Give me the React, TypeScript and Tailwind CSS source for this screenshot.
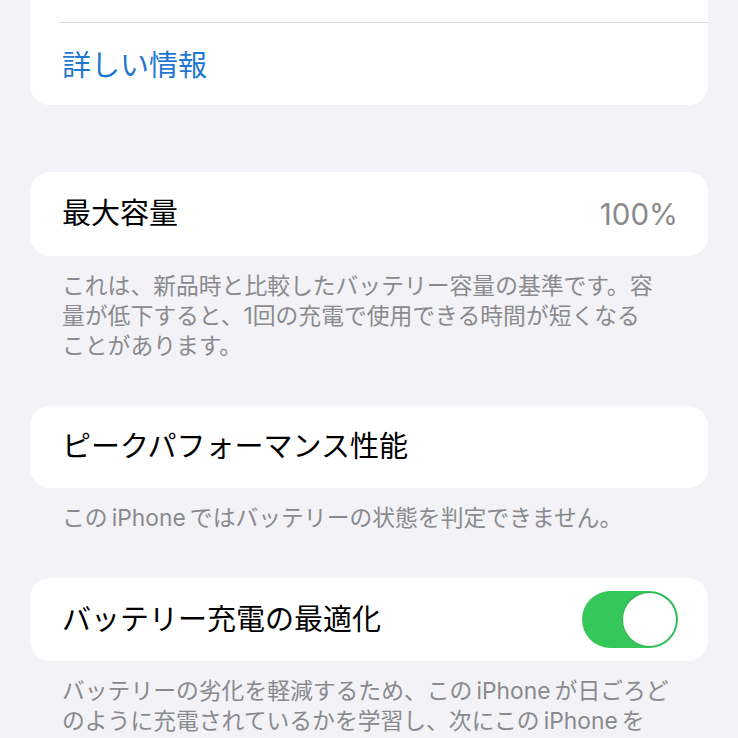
const Footer = ({ lines }: { lines: string[] }) => {
  return (
    <div className="px-[32px] pt-[15px] pb-[45px] text-[22.8px] leading-[30px] text-[#8a8a8e]">
      {lines.map((line) => (
        <p key={line} className="whitespace-nowrap">
          {line}
        </p>
      ))}
    </div>
  );
};

const Toggle = () => {
  return (
    <div className="flex h-[57px] w-[96px] items-center justify-end rounded-full bg-[#35c759] p-[2px]">
      <div className="h-[53px] w-[53px] rounded-full bg-white ring-1 ring-[#2fb24f]" />
    </div>
  );
};

const App = () => {
  return (
    <div className="min-h-screen overflow-hidden bg-[#f2f2f7] px-[30px] font-['Inter','Noto_Sans_CJK_JP',sans-serif]">
      <div className="rounded-b-[20px] bg-white">
        <div className="h-[22px]" />
        <div className="ml-[29px] h-px bg-[#d8d8dc]" />
        <div className="flex h-[82px] items-center px-[32px] pt-[3px] text-[29px] text-[#1f78d0]">
          詳しい情報
        </div>
      </div>

      <div className="mt-[67px] flex h-[84px] items-center justify-between rounded-[20px] bg-white pl-[32px] pr-[30px] text-[29px]">
        <span className="text-black">最大容量</span>
        <span className="text-[29.5px] text-[#8a8a8e]">100%</span>
      </div>
      <Footer
        lines={[
          'これは、新品時と比較したバッテリー容量の基準です。容',
          '量が低下すると、1回の充電で使用できる時間が短くなる',
          'ことがあります。',
        ]}
      />

      <div className="flex h-[82px] items-center rounded-[20px] bg-white px-[32px] text-[29px] text-black">
        ピークパフォーマンス性能
      </div>
      <Footer lines={['この\u2009iPhone\u2009ではバッテリーの状態を判定できません。']} />

      <div className="flex h-[83px] items-center justify-between rounded-[20px] bg-white pl-[32px] pr-[30px] text-[29px] text-black">
        <span>バッテリー充電の最適化</span>
        <Toggle />
      </div>
      <Footer
        lines={[
          'バッテリーの劣化を軽減するため、この\u2009iPhone\u2009が日ごろど',
          'のように充電されているかを学習し、次にこの\u2009iPhone\u2009を',
        ]}
      />
    </div>
  );
};

export default App;
